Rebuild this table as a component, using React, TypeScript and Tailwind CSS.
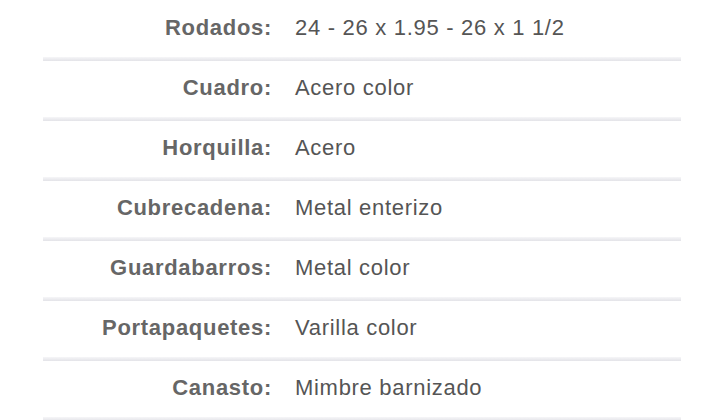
import React from "react";

const rows: [string, string][] = [
  ["Rodados:", "24 - 26 x 1.95 - 26 x 1 1/2"],
  ["Cuadro:", "Acero color"],
  ["Horquilla:", "Acero"],
  ["Cubrecadena:", "Metal enterizo"],
  ["Guardabarros:", "Metal color"],
  ["Portapaquetes:", "Varilla color"],
  ["Canasto:", "Mimbre barnizado"],
];

export default function App() {
  return (
    <div
      className="w-[720px] h-[420px] bg-white overflow-hidden"
      style={{ fontFamily: '"Liberation Sans", Arial, sans-serif' }}
    >
      <div className="ml-[43px] w-[638px] pt-[1px] flex flex-col">
        {rows.map(([label, value]) => (
          <div key={label} className="flex flex-col">
            <div className="h-[56px] pb-[3px] flex items-center text-[22px] tracking-[0.7px]">
              <div className="w-[229px] text-right font-bold text-[#666666]">{label}</div>
              <div className="pl-[23px] text-[#555555]">{value}</div>
            </div>
            <div className="h-[4px] bg-gradient-to-b from-[#f6f6f8] to-[#e3e3e8]" />
          </div>
        ))}
      </div>
    </div>
  );
}
